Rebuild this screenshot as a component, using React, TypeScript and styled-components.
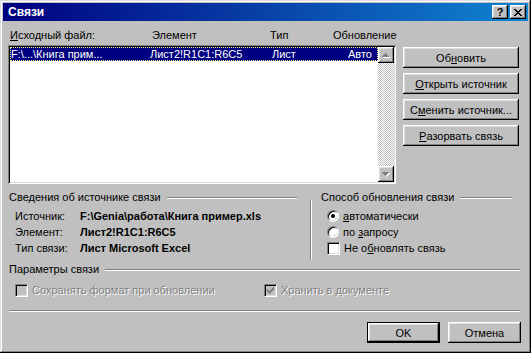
import styled, { createGlobalStyle, css } from "styled-components";

const GlobalStyle = createGlobalStyle`
  html, body { margin: 0; padding: 0; background: #c0c0c0; }
  body {
    font-family: "Liberation Sans", Arial, sans-serif;
    font-size: 11px;
    color: #000;
  }
`;

const raised = css`
  box-shadow: inset -1px -1px #000, inset 1px 1px #fff, inset -2px -2px #808080,
    inset 2px 2px #dfdfdf;
`;

const sunken = css`
  box-shadow: inset 1px 1px #808080, inset -1px -1px #fff, inset 2px 2px #000,
    inset -2px -2px #dfdfdf;
`;

// pixel icons, one string per row
const PixelIcon = ({ rows, color, shadow }: { rows: string[]; color: string; shadow?: string }) => {
  const w = rows[0].length + (shadow ? 1 : 0);
  const h = rows.length + (shadow ? 1 : 0);
  const cells: { x: number; y: number }[] = [];
  rows.forEach((r, y) => r.split("").forEach((c, x) => c === "#" && cells.push({ x, y })));
  return (
    <svg width={w} height={h} viewBox={`0 0 ${w} ${h}`} shapeRendering="crispEdges">
      {shadow && cells.map((p, i) => <rect key={"s" + i} x={p.x + 1} y={p.y + 1} width={1} height={1} fill={shadow} />)}
      {cells.map((p, i) => <rect key={i} x={p.x} y={p.y} width={1} height={1} fill={color} />)}
    </svg>
  );
};

const ARROW_UP = ["...#...", "..###..", ".#####.", "#######"];
const ARROW_DOWN = ["#######", ".#####.", "..###..", "...#..."];
const CHECK = ["......#", ".....##", "#...###", "##.###.", "#####..", ".###...", "..#...."];
const CLOSE = ["##....##", ".##..##.", "..####..", "...##...", "..####..", ".##..##.", "##....##"];

const Window = styled.div`
  width: 531px;
  height: 353px;
  box-sizing: border-box;
  padding: 3px;
  display: flex;
  flex-direction: column;
  background: #c0c0c0;
  box-shadow: inset -1px -1px #000, inset 1px 1px #dfdfdf, inset -2px -2px #808080,
    inset 2px 2px #fff;
`;

const TitleBar = styled.div`
  height: 18px;
  display: flex;
  align-items: center;
  padding: 0 2px 0 5px;
  background: linear-gradient(to right, #000080, #1084d0);
  color: #fff;
  font-weight: bold;
  font-size: 12px;
`;

const TitleButtons = styled.div`
  margin-left: auto;
  display: flex;
  gap: 2px;
`;

const TitleButton = styled.div`
  width: 16px;
  height: 14px;
  display: flex;
  align-items: center;
  justify-content: center;
  background: #c0c0c0;
  color: #000;
  font-size: 11px;
  font-weight: bold;
  line-height: 14px;
  ${raised}
`;

const Body = styled.div`
  flex: 1;
  display: flex;
  flex-direction: column;
  padding: 7px 7px 0 5px;
`;

const TopSection = styled.div`
  display: flex;
  gap: 7px;
`;

const ListColumn = styled.div`
  width: 388px;
  display: flex;
  flex-direction: column;
`;

const HeaderRow = styled.div`
  height: 17px;
  box-sizing: border-box;
  padding: 1px 0 0 2px;
  line-height: 13px;
  display: grid;
  grid-template-columns: 142px 118px 63px 1fr;
`;

const ListBox = styled.div`
  height: 139px;
  box-sizing: border-box;
  padding: 2px;
  display: flex;
  background: #fff;
  ${sunken}
`;

const Items = styled.div`
  flex: 1;
  min-width: 0;
  background: #fff;
`;

const ItemRow = styled.div<{ $selected?: boolean }>`
  height: 14px;
  box-sizing: border-box;
  line-height: 12px;
  padding-right: 5px;
  display: grid;
  grid-template-columns: 139px 122px 1fr auto;
  white-space: nowrap;
  background: ${(p) => (p.$selected ? "#000080" : "transparent")};
  color: ${(p) => (p.$selected ? "#fff" : "#000")};
  border: 1px dotted ${(p) => (p.$selected ? "#ffff80" : "transparent")};
`;

const ScrollBar = styled.div`
  width: 16px;
  flex-shrink: 0;
  display: flex;
  flex-direction: column;
`;

const ScrollArrow = styled.div`
  width: 16px;
  height: 16px;
  display: flex;
  align-items: center;
  justify-content: center;
  background: #c0c0c0;
  ${raised}
`;

const ScrollTrack = styled.div`
  flex: 1;
  background: repeating-conic-gradient(#c0c0c0 0 25%, #fff 0 50%) 0 0 / 2px 2px;
`;

const ButtonColumn = styled.div`
  width: 116px;
  padding-top: 19px;
  display: flex;
  flex-direction: column;
  gap: 5px;
`;

const Button = styled.div<{ $default?: boolean; $width?: number }>`
  width: ${(p) => (p.$width ? p.$width + "px" : "100%")};
  height: 21px;
  box-sizing: border-box;
  display: flex;
  align-items: center;
  justify-content: center;
  background: #c0c0c0;
  white-space: nowrap;
  ${(p) =>
    p.$default
      ? css`
          box-shadow: inset 0 0 0 1px #000, inset -2px -2px #000, inset 2px 2px #fff,
            inset -3px -3px #808080, inset 3px 3px #dfdfdf;
        `
      : raised}
`;

const Key = styled.u`
  text-decoration: underline;
  text-underline-offset: 1px;
`;

const MidSection = styled.div`
  margin-top: 7px;
  height: 71px;
  display: flex;
`;

const GroupHeader = styled.div<{ $indent?: number }>`
  height: 13px;
  display: flex;
  align-items: center;
  padding-left: ${(p) => p.$indent ?? 0}px;
  line-height: 13px;
  white-space: nowrap;
`;

const Etched = styled.div<{ $gap?: number }>`
  flex: 1;
  height: 0;
  margin-left: ${(p) => p.$gap ?? 6}px;
  border-top: 1px solid #808080;
  border-bottom: 1px solid #fff;
`;

const LeftGroup = styled.div`
  width: 288px;
  margin-left: 1px;
`;

const InfoList = styled.div`
  padding: 4px 0 0 6px;
`;

const InfoRow = styled.div`
  height: 16px;
  line-height: 16px;
  display: grid;
  grid-template-columns: 65px 1fr;
  white-space: nowrap;
`;

const InfoValue = styled.span`
  font-weight: bold;
`;

const RightGroup = styled.div`
  position: relative;
  width: 202px;
  margin-left: 13px;

  &::before {
    content: "";
    position: absolute;
    left: 0;
    top: 9px;
    bottom: 2px;
    width: 0;
    border-left: 1px solid #808080;
    border-right: 1px solid #fff;
  }
`;

const Options = styled.div`
  padding: 4px 0 0 17px;
`;

const OptionRow = styled.div`
  height: 16px;
  display: flex;
  align-items: center;
  gap: 4px;
  white-space: nowrap;
`;

const Radio = styled.span<{ $checked?: boolean }>`
  width: 12px;
  height: 12px;
  box-sizing: border-box;
  border-radius: 50%;
  background: #fff;
  border: 1px solid;
  border-color: #808080 #fff #fff #808080;
  box-shadow: inset 1px 1px #000, inset -1px -1px #dfdfdf;
  display: flex;
  align-items: center;
  justify-content: center;

  &::after {
    content: "";
    width: 4px;
    height: 4px;
    border-radius: 50%;
    background: ${(p) => (p.$checked ? "#000" : "transparent")};
  }
`;

const CheckBox = styled.span<{ $disabled?: boolean }>`
  width: 13px;
  height: 13px;
  box-sizing: border-box;
  background: ${(p) => (p.$disabled ? "#c0c0c0" : "#fff")};
  border: 1px solid;
  border-color: #808080 #fff #fff #808080;
  box-shadow: inset 1px 1px #000, inset -1px -1px #dfdfdf;
  display: flex;
  align-items: center;
  justify-content: center;
  flex-shrink: 0;
`;

const ParamsSection = styled.div`
  margin: 1px 1px 0 1px;
`;

const ParamsRow = styled.div`
  margin-top: 7px;
  height: 14px;
  padding-left: 6px;
  display: grid;
  grid-template-columns: 249px 1fr;
`;

const DisabledOption = styled.div`
  display: flex;
  align-items: center;
  gap: 4px;
  color: #808080;
  text-shadow: 1px 1px #fff;
  white-space: nowrap;
`;

const Separator = styled.div`
  margin: 13px 1px 0 1px;
  border-top: 1px solid #808080;
  border-bottom: 1px solid #fff;
`;

const Footer = styled.div`
  margin-top: 10px;
  display: flex;
  justify-content: flex-end;
  gap: 8px;
`;

export default function App() {
  return (
    <>
      <GlobalStyle />
      <Window>
        <TitleBar>
          Связи
          <TitleButtons>
            <TitleButton>?</TitleButton>
            <TitleButton>
              <PixelIcon rows={CLOSE} color="#000" />
            </TitleButton>
          </TitleButtons>
        </TitleBar>
        <Body>
          <TopSection>
            <ListColumn>
              <HeaderRow>
                <span>
                  <Key>И</Key>сходный файл:
                </span>
                <span>Элемент</span>
                <span>Тип</span>
                <span>Обновление</span>
              </HeaderRow>
              <ListBox>
                <Items>
                  <ItemRow $selected>
                    <span>F:\...\Книга прим...</span>
                    <span>Лист2!R1C1:R6C5</span>
                    <span>Лист</span>
                    <span>Авто</span>
                  </ItemRow>
                </Items>
                <ScrollBar>
                  <ScrollArrow>
                    <PixelIcon rows={ARROW_UP} color="#808080" shadow="#fff" />
                  </ScrollArrow>
                  <ScrollTrack />
                  <ScrollArrow>
                    <PixelIcon rows={ARROW_DOWN} color="#808080" shadow="#fff" />
                  </ScrollArrow>
                </ScrollBar>
              </ListBox>
            </ListColumn>
            <ButtonColumn>
              <Button>
                Об<Key>н</Key>овить
              </Button>
              <Button>
                <Key>О</Key>ткрыть источник
              </Button>
              <Button>
                С<Key>м</Key>енить источник...
              </Button>
              <Button>
                <Key>Р</Key>азорвать связь
              </Button>
            </ButtonColumn>
          </TopSection>

          <MidSection>
            <LeftGroup>
              <GroupHeader>
                Сведения об источнике связи
                <Etched />
              </GroupHeader>
              <InfoList>
                <InfoRow>
                  <span>Источник:</span>
                  <InfoValue>F:\Genia\работа\Книга пример.xls</InfoValue>
                </InfoRow>
                <InfoRow>
                  <span>Элемент:</span>
                  <InfoValue>Лист2!R1C1:R6C5</InfoValue>
                </InfoRow>
                <InfoRow>
                  <span>Тип связи:</span>
                  <InfoValue>Лист Microsoft Excel</InfoValue>
                </InfoRow>
              </InfoList>
            </LeftGroup>
            <RightGroup>
              <GroupHeader $indent={11}>
                Способ обновления связи
                <Etched />
              </GroupHeader>
              <Options>
                <OptionRow>
                  <Radio $checked />
                  <span>
                    <Key>а</Key>втоматически
                  </span>
                </OptionRow>
                <OptionRow>
                  <Radio />
                  <span>
                    по <Key>з</Key>апросу
                  </span>
                </OptionRow>
                <OptionRow>
                  <CheckBox />
                  <span>
                    Не о<Key>б</Key>новлять связь
                  </span>
                </OptionRow>
              </Options>
            </RightGroup>
          </MidSection>

          <ParamsSection>
            <GroupHeader>
              Параметры связи
              <Etched />
            </GroupHeader>
            <ParamsRow>
              <DisabledOption>
                <CheckBox $disabled />
                <span>Сохранять формат при обновлении</span>
              </DisabledOption>
              <DisabledOption>
                <CheckBox $disabled>
                  <PixelIcon rows={CHECK} color="#808080" />
                </CheckBox>
                <span>Хранить в документе</span>
              </DisabledOption>
            </ParamsRow>
          </ParamsSection>

          <Separator />

          <Footer>
            <Button $default $width={73}>
              OK
            </Button>
            <Button $width={73}>Отмена</Button>
          </Footer>
        </Body>
      </Window>
    </>
  );
}
